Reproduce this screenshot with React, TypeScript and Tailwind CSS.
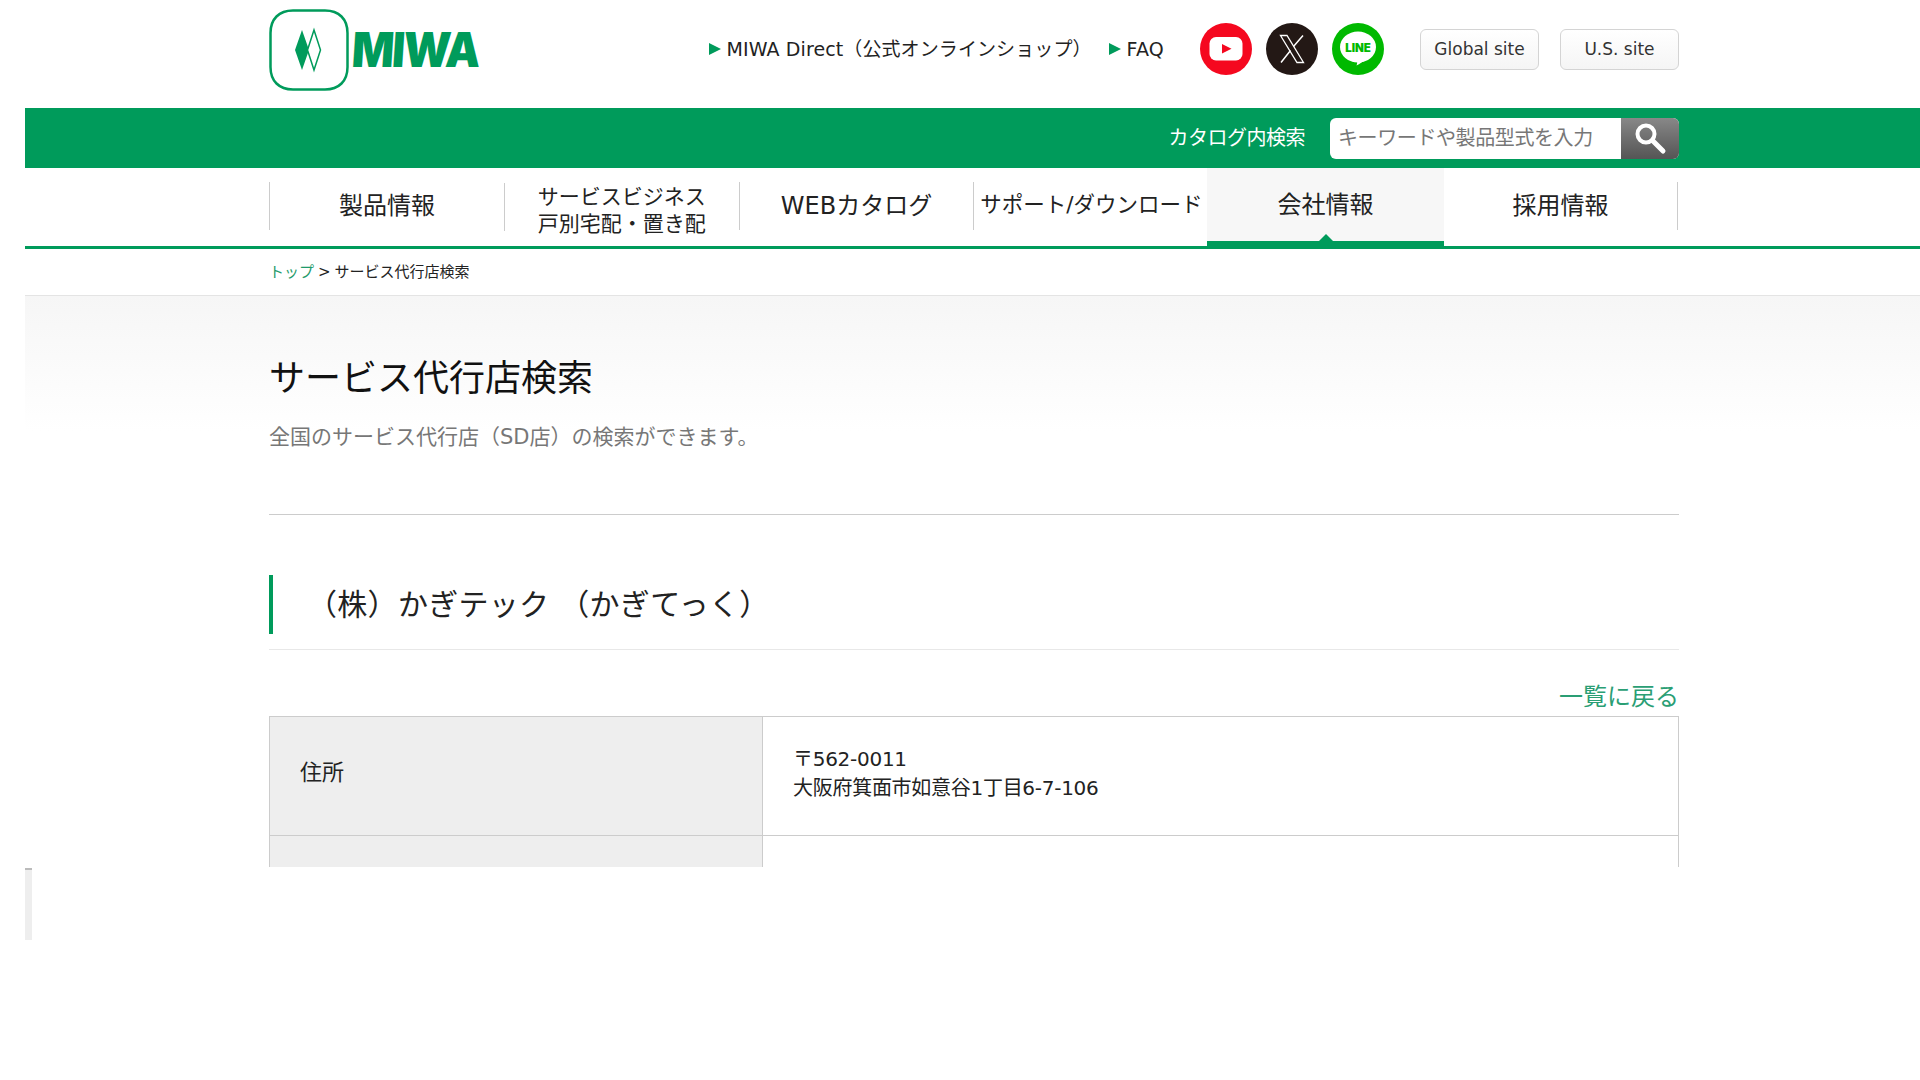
import React from "react";

const navItems = ["製品情報", "サービスビジネス\n戸別宅配・置き配", "WEBカタログ", "サポート/ダウンロード", "会社情報", "採用情報"];

function Logo() {
  return (
    <div className="flex items-center">
      <svg width="80" height="82" viewBox="0 0 80 82" className="block">
        <path d="M24 1.500h32c14 0 22.500 8.500 22.500 22.500v34c0 14-8.500 22.500-22.500 22.500H24C10 80.500 1.500 72 1.500 58V24C1.500 10 10 1.500 24 1.500z" fill="none" stroke="#009b5b" strokeWidth="2.500" />
        <path d="M33 21l7 20-7 20-7-20z" fill="#009b5b" />
        <path d="M45 21l6.500 20-6.500 20-6.500-20z" fill="#fff" stroke="#009b5b" strokeWidth="1.500" />
      </svg>
      <span className="ml-[3px] origin-left scale-x-[0.92] font-['Inter',sans-serif] text-[48px] leading-none font-black tracking-[-2px] text-[#009b5b] skew-x-[-4deg]">MIWA</span>
    </div>
  );
}

function SocialIcons() {
  return (
    <div className="flex gap-[14px]">
      <svg width="52" height="52" viewBox="0 0 52 52">
        <circle cx="26" cy="26" r="26" fill="#f5081f" />
        <rect x="9.500" y="14" width="33" height="23.500" rx="6.500" fill="#fff" />
        <path d="M22 21l9.500 4.700-9.500 4.700z" fill="#f5081f" />
      </svg>
      <svg width="52" height="52" viewBox="0 0 52 52">
        <circle cx="26" cy="26" r="26" fill="#231815" />
        <path d="M14.500 12.500h6.500l16.500 27h-6.500z" fill="none" stroke="#fff" strokeWidth="1.300" />
        <path d="M37 12.500L27.500 23.500M24.500 27.500L15 39.500" stroke="#fff" strokeWidth="1.500" fill="none" />
      </svg>
      <svg width="52" height="52" viewBox="0 0 52 52">
        <circle cx="26" cy="26" r="26" fill="#00b900" />
        <ellipse cx="26" cy="24" rx="18" ry="15.500" fill="#fff" />
        <path d="M24 37c1.500 1 1.500 3 .5 5.500 3-1.500 7-4 10-7z" fill="#fff" />
        <text x="26" y="28.500" textAnchor="middle" fontFamily="Inter, sans-serif" fontWeight="900" fontSize="11.500" fill="#00b900">LINE</text>
      </svg>
    </div>
  );
}

function SiteButton({ label }: { label: string }) {
  return (
    <a className="flex h-[41px] w-[119px] items-center justify-center rounded-[6px] border border-[#d4d4d4] bg-linear-to-b from-white to-[#f5f5f5] pt-[1px] text-[17px] text-[#333]">
      {label}
    </a>
  );
}

function Arrow() {
  return <span className="mr-[6px] h-0 w-0 border-y-[6.500px] border-l-[12px] border-y-transparent border-l-[#009b5b]" />;
}

export default function App() {
  return (
    <div className="min-h-[1080px] bg-white pl-[25px] font-['DejaVu_Sans','Noto_Sans_CJK_JP',sans-serif] text-[#222]">
      <div className="h-[867px] overflow-hidden">
        {/* Header */}
        <header className="ml-[244px] flex h-[108px] w-[1410px] items-start pt-[9px]">
          <Logo />
          <div className="ml-auto flex items-center pt-[14px]">
            <a className="flex items-center text-[19px] tracking-[0.1px]">
              <Arrow />
              MIWA Direct（公式オンラインショップ）
            </a>
            <a className="ml-[17px] flex items-center text-[19px] tracking-[0.2px]">
              <Arrow />
              FAQ
            </a>
            <div className="ml-[36px]">
              <SocialIcons />
            </div>
            <div className="ml-[36px] flex gap-[21px]">
              <SiteButton label="Global site" />
              <SiteButton label="U.S. site" />
            </div>
          </div>
        </header>

        {/* Search band */}
        <div className="flex h-[60px] items-center justify-end bg-[#009b5b] pr-[241px]">
          <span className="mr-[25px] text-[20px] tracking-[-0.5px] text-white">カタログ内検索</span>
          <div className="flex h-[41px] w-[349px] overflow-hidden rounded-[6px] bg-white">
            <div className="flex-1 pl-[8px] text-[20px] leading-[41px] tracking-[-0.4px] text-[#777]">キーワードや製品型式を入力</div>
            <div className="flex w-[58px] items-center justify-center bg-linear-to-b from-[#888] to-[#555]">
              <svg width="34" height="34" viewBox="0 0 34 34" fill="none" stroke="#fff">
                <circle cx="13" cy="13" r="8.500" strokeWidth="4" />
                <path d="M19.500 19.500L30 30" strokeWidth="5" strokeLinecap="round" />
              </svg>
            </div>
          </div>
        </div>

        {/* Global nav */}
        <nav className="border-b-[3px] border-[#009b5b]">
          <ul className="ml-[244px] flex h-[78px] w-[1410px]">
            {navItems.map((item, i) => {
              const active = i === 4;
              return (
                <li
                  key={item}
                  className={
                    active
                      ? "relative -ml-[1px] -mr-[1px] flex w-[236.800px] items-center justify-center border-b-[5px] border-[#009b5b] bg-[#f7f7f7] text-[24px]"
                      : i === 1
                        ? "flex w-[234.800px] items-center justify-center text-[24px]"
                        : i === 5
                          ? "flex w-[235px] items-center justify-center pb-[3px] text-[24px]"
                          : "flex w-[234.800px] items-center justify-center pb-[3px] text-[24px]"
                  }
                >
                  {!active && <span className="h-[48px] w-px shrink-0 self-center bg-[#ccc]" />}
                  <span className={i === 1 ? "flex-1 whitespace-pre-line pt-[8px] text-center text-[21px] leading-[27px]" : i === 3 ? "flex-1 whitespace-nowrap text-center text-[21.500px]" : "flex-1 text-center"}>
                    {item}
                  </span>
                  {i === 5 && <span className="h-[48px] w-px shrink-0 self-center bg-[#ccc]" />}
                  {active && <span className="absolute bottom-0 left-1/2 h-0 w-0 -translate-x-1/2 border-x-[7px] border-b-[7px] border-x-transparent border-b-[#009b5b]" />}
                </li>
              );
            })}
          </ul>
        </nav>

        {/* Breadcrumb */}
        <div className="ml-[244px] flex h-[46px] w-[1410px] items-center text-[15px]">
          <a className="text-[#1f9b6b]">トップ</a>
          <span className="mx-[4px]">&gt;</span>
          <span>サービス代行店検索</span>
        </div>

        {/* Page title */}
        <section className="border-t border-[#e4e4e4] bg-[linear-gradient(#f6f6f6,#fff_135px)]">
          <div className="ml-[244px] w-[1410px] border-b border-[#ccc] pt-[58px] pb-[62px]">
            <h1 className="text-[36px] leading-[50px] text-[#111]">サービス代行店検索</h1>
            <p className="mt-[18px] text-[21px] leading-[30px] text-[#777]">全国のサービス代行店（SD店）の検索ができます。</p>
          </div>
        </section>

        {/* Shop detail */}
        <section className="ml-[244px] w-[1410px] pt-[60px]">
          <div className="border-b border-[#e8e8e8] pb-[15px]">
            <h2 className="flex h-[59px] items-center border-l-4 border-[#009b5b] pl-[34px] text-[30px] tracking-[0.3px]">（株）かぎテック （かぎてっく）</h2>
          </div>
          <div className="mt-[31px] text-right text-[24px] leading-[32px] text-[#2a9e74]">一覧に戻る</div>
          <table className="mt-[3px] w-full table-fixed border-collapse border border-[#ccc] text-[20px]">
            <tbody>
              <tr className="h-[119px]">
                <th className="w-[493px] border border-[#ccc] bg-[#eee] pb-[7px] pl-[30px] text-left text-[22px] font-normal">住所</th>
                <td className="border border-[#ccc] pb-[5px] pl-[30px] leading-[29px] tracking-[-0.28px]">
                  〒562-0011
                  <br />
                  大阪府箕面市如意谷1丁目6-7-106
                </td>
              </tr>
              <tr className="h-[119px]">
                <th className="border border-[#ccc] bg-[#eee]"></th>
                <td className="border border-[#ccc]"></td>
              </tr>
            </tbody>
          </table>
        </section>
      </div>
      <div className="mt-[1px] h-[72px] w-[7px] border-t-2 border-[#bbb] bg-[#eee]" />
    </div>
  );
}
